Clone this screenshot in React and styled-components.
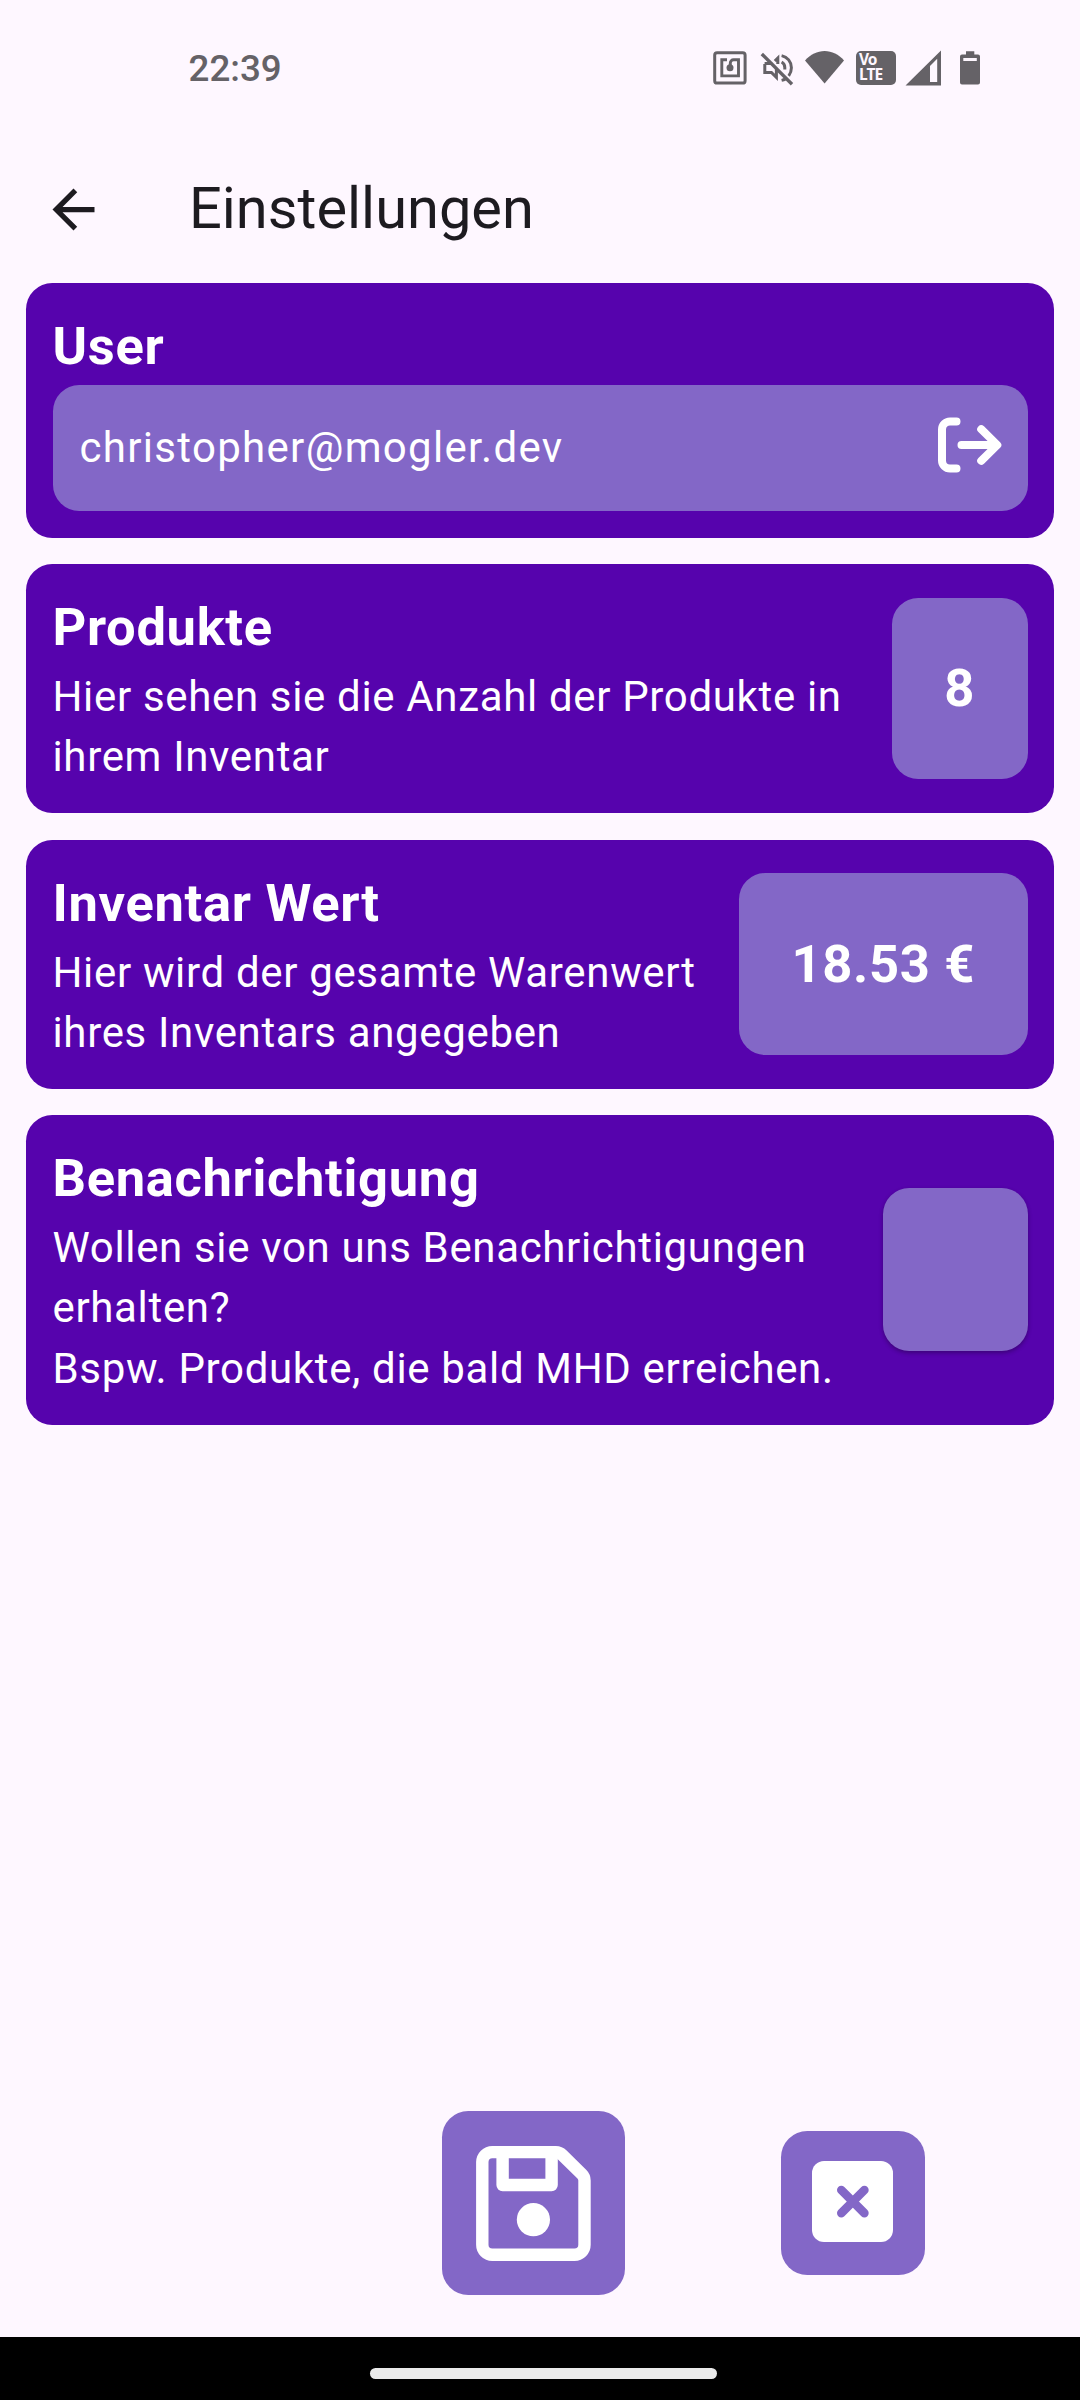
import React from "react";
import styled, { createGlobalStyle, css } from "styled-components";

const color = {
  surface: "#fef7ff",
  onSurface: "#1d1b20",
  status: "#656267",
  primary: "#5603ad",
  secondary: "#8367c7",
  white: "#ffffff",
};

const GlobalStyle = createGlobalStyle`
  *, *::before, *::after { box-sizing: border-box; }
  body { margin: 0; background: ${color.surface}; }
  h1, h2, p { margin: 0; }
  button { border: 0; padding: 0; background: none; font: inherit; color: inherit; cursor: pointer; }
  svg { display: block; flex: none; }
`;

const Screen = styled.div`
  width: 1080px;
  height: 2400px;
  display: flex;
  flex-direction: column;
  background: ${color.surface};
  font-family: Roboto, "Noto Sans", sans-serif;
  color: ${color.white};
`;

const StatusBar = styled.header`
  height: 136px;
  padding: 0 80px 0 188.5px;
  display: flex;
  align-items: center;
  justify-content: space-between;
  color: ${color.status};
`;

const Clock = styled.span`
  padding-top: 2px;
  font-size: 36.75px;
  line-height: 44px;
  font-weight: 500;
`;

const StatusIcons = styled.div`
  width: 300px;
  height: 76px;
  display: flex;
  align-items: flex-start;
`;

const VolteBadge = styled.div`
  width: 40px;
  height: 34.5px;
  margin-top: 20.5px;
  padding: 1.5px 0 0 3px;
  border-radius: 5px;
  background: ${color.status};
  color: ${color.surface};
  font-family: "Noto Sans", sans-serif;
  font-size: 15.5px;
  line-height: 14.8px;
  font-weight: 700;
  letter-spacing: -0.9px;
  white-space: pre-line;
`;

const AppBar = styled.div`
  height: 147px;
  padding-left: 42px;
  display: flex;
  align-items: center;
  color: ${color.onSurface};
`;

const BackButton = styled.button`
  width: 147px;
  height: 63px;
`;

const Title = styled.h1`
  padding-bottom: 2px;
  font-size: 57.75px;
  line-height: 73.5px;
  font-weight: 400;
`;

const CardList = styled.main`
  flex: 1;
  padding: 0 26.25px;
  display: flex;
  flex-direction: column;
  gap: 26.25px;
`;

const rounded = css`
  border-radius: 26.25px;
`;

const Card = styled.section`
  ${rounded}
  height: ${(p) => p.$height}px;
  padding: 26.25px;
  display: flex;
  flex-direction: ${(p) => (p.$column ? "column" : "row")};
  align-items: ${(p) => (p.$column ? "stretch" : "center")};
  background: ${color.primary};
`;

const CardText = styled.div`
  flex: 1;
  align-self: flex-start;
`;

const CardTitle = styled.h2`
  margin-bottom: ${(p) => p.$gap || 1.5}px;
  font-size: 52.5px;
  line-height: 74.4px;
  font-weight: 700;
  letter-spacing: 0.66px;
`;

const CardBody = styled.p`
  font-size: 42px;
  line-height: 60.3px;
  letter-spacing: 0.66px;
  white-space: pre-line;
`;

const UserField = styled.div`
  ${rounded}
  height: 126px;
  padding: 0 25.75px 2px 27px;
  display: flex;
  align-items: center;
  justify-content: space-between;
  background: ${color.secondary};
  font-size: 42px;
  letter-spacing: 1.31px;
`;

const LogoutButton = styled.button`
  height: 60px;
  margin-bottom: 4px;
`;

const ValueBox = styled.div`
  ${rounded}
  height: 181.5px;
  padding: 0 52.5px 1.2px;
  display: flex;
  align-items: center;
  background: ${color.secondary};
  font-size: 52.5px;
  font-weight: 700;
  letter-spacing: 0.66px;
  white-space: nowrap;
`;

const ToggleBox = styled.button`
  ${rounded}
  && { background: ${color.secondary}; }
  width: 144.4px;
  height: 163px;
  box-shadow: 0 2px 4px rgba(0, 0, 0, 0.3);
`;

const ActionBar = styled.footer`
  height: 226px;
  padding: 0 155px 0 441.5px;
  display: flex;
  align-items: flex-start;
  justify-content: space-between;
`;

const ActionButton = styled.button`
  ${rounded}
  && { background: ${color.secondary}; }
  width: ${(p) => p.$size}px;
  height: ${(p) => p.$size}px;
  margin-top: ${(p) => p.$drop || 0}px;
  padding-bottom: ${(p) => p.$lift || 0}px;
  display: flex;
  align-items: center;
  justify-content: center;
`;

const NavigationBar = styled.nav`
  height: 63px;
  padding: 10px 0 0 7px;
  display: flex;
  align-items: center;
  justify-content: center;
  background: #000;
`;

const Handle = styled.div`
  width: 347px;
  height: 11px;
  border-radius: 5.5px;
  background: #eaeaea;
`;

const NfcMuteWifiIcons = () => (
  <svg width="156" height="76" viewBox="0 0 156 76" fill="none">
    <rect x="14.7" y="22.7" width="30.4" height="30.4" rx="2.4" stroke="currentColor" strokeWidth="3" />
    <path
      d="M27 29.800H21.800V45.900H38.500V29.800H33.500a3.200 3.200 0 0 0-3.200 3.200V38"
      stroke="currentColor"
      strokeWidth="2.9"
    />
    <circle cx="30" cy="37.8" r="3.5" fill="currentColor" />
    <g stroke="currentColor" strokeWidth="3">
      <path d="M64.600 33.600h7.600M64.800 34v8.400h6.600l5 5V38" />
      <path d="M74.800 31l3-3v6" />
      <path d="M81.600 25.600c5.800 1.300 9.800 6.100 9.800 12.200 0 3-1 5.800-2.700 8" />
      <path d="M81.600 50.400c1.400-.3 2.800-.8 4-1.500" />
      <path d="M81.600 32c2 1 3.200 3 3.200 5.500v2" />
      <path d="M61.800 24L92 54.200" strokeWidth="3.4" />
    </g>
    <path d="M105 30.500C110.500 24.500 117.300 21 124.600 21s14.100 3.500 19.400 9.500L124.600 53.500z" fill="currentColor" />
  </svg>
);

const SignalBatteryIcons = () => (
  <svg width="104" height="76" viewBox="196 0 104 76" fill="currentColor">
    <path fillRule="evenodd" d="M205.500 55.500L241 20.500v35zM230 52h7.200V28.800L230 36z" />
    <path
      fillRule="evenodd"
      d="M266 21.300h8.300v3.200h3.700a2 2 0 0 1 2 2v26a2 2 0 0 1-2 2h-16a2 2 0 0 1-2-2v-26a2 2 0 0 1 2-2h4zM263.300 28v3h13.500v-3z"
    />
  </svg>
);

const BackIcon = () => (
  <svg width="63" height="63" viewBox="0 0 24 24" fill="currentColor">
    <path d="M20 11H7.830l5.590-5.590L12 4l-8 8 8 8 1.410-1.410L7.830 13H20v-2z" />
  </svg>
);

const LogoutIcon = () => (
  <svg width="66" height="60" viewBox="0 0 66 60" fill="none" stroke="currentColor" strokeWidth="8" strokeLinecap="round" strokeLinejoin="round">
    <path d="M20.500 6.400H14a8 8 0 0 0-8 8v31.200a8 8 0 0 0 8 8h6.500" />
    <path d="M25.500 30H61M45.200 14.200L61.300 30 45.200 45.800" />
  </svg>
);

const SaveIcon = () => (
  <svg width="116" height="116" viewBox="0 0 116 116" fill="none" stroke="currentColor" strokeWidth="12.4" strokeLinejoin="round">
    <path d="M17.300 7.100H80.800a9 9 0 0 1 6.400 2.700L106.800 29.100a9 9 0 0 1 2.700 6.400v64.300a10 10 0 0 1-10 10H17.300a10 10 0 0 1-10-10V17.100a10 10 0 0 1 10-10z" />
    <path d="M27.600 8.500v31.500H76.600V8.500" />
    <circle cx="58.4" cy="74.7" r="16.6" fill="currentColor" stroke="none" />
  </svg>
);

const CloseIcon = () => (
  <svg width="81" height="81" viewBox="0 0 81 81">
    <rect width="81" height="81" rx="12" fill="currentColor" />
    <path d="M29.300 29L52.400 52.100M52.400 29L29.300 52.100" stroke={color.secondary} strokeWidth="8.6" strokeLinecap="round" />
  </svg>
);

const InfoCard = ({ title, body, height, children }) => (
  <Card $height={height}>
    <CardText>
      <CardTitle $gap={2.6}>{title}</CardTitle>
      <CardBody>{body}</CardBody>
    </CardText>
    {children}
  </Card>
);

export default function App() {
  return (
    <Screen>
      <GlobalStyle />
      <StatusBar>
        <Clock>22:39</Clock>
        <StatusIcons>
          <NfcMuteWifiIcons />
          <VolteBadge>{"Vo\nLTE"}</VolteBadge>
          <SignalBatteryIcons />
        </StatusIcons>
      </StatusBar>
      <AppBar>
        <BackButton aria-label="Zurück">
          <BackIcon />
        </BackButton>
        <Title>Einstellungen</Title>
      </AppBar>
      <CardList>
        <Card $column $height={254.5}>
          <CardTitle>User</CardTitle>
          <UserField>
            <span>christopher@mogler.dev</span>
            <LogoutButton aria-label="Abmelden">
              <LogoutIcon />
            </LogoutButton>
          </UserField>
        </Card>
        <InfoCard
          title="Produkte"
          body={"Hier sehen sie die Anzahl der Produkte in\nihrem Inventar"}
          height={249.6}
        >
          <ValueBox>8</ValueBox>
        </InfoCard>
        <InfoCard
          title="Inventar Wert"
          body={"Hier wird der gesamte Warenwert\nihres Inventars angegeben"}
          height={249.1}
        >
          <ValueBox>18.53 €</ValueBox>
        </InfoCard>
        <InfoCard
          title="Benachrichtigung"
          body={"Wollen sie von uns Benachrichtigungen\nerhalten?\nBspw. Produkte, die bald MHD erreichen."}
          height={309.6}
        >
          <ToggleBox aria-label="Benachrichtigungen" />
        </InfoCard>
      </CardList>
      <ActionBar>
        <ActionButton $size={183.75} aria-label="Speichern">
          <SaveIcon />
        </ActionButton>
        <ActionButton $size={144.4} $drop={19.7} $lift={2.6} aria-label="Abbrechen">
          <CloseIcon />
        </ActionButton>
      </ActionBar>
      <NavigationBar>
        <Handle />
      </NavigationBar>
    </Screen>
  );
}
